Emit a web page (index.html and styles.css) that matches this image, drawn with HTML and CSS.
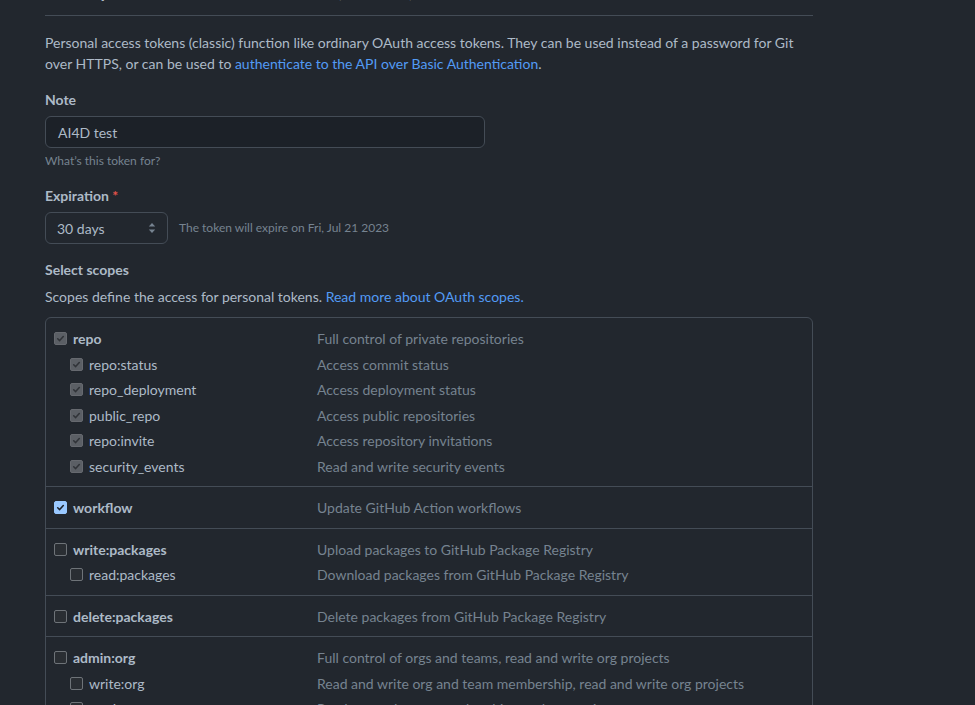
FILE: index.html
```html
<!DOCTYPE html>
<html lang="en">
<head>
<meta charset="utf-8">
<title>New personal access token (classic)</title>
<link rel="stylesheet" href="styles.css">
</head>
<body>
<main class="page">
  <div class="subhead">
    <h1 class="subhead-title">New personal access token (classic)</h1>
  </div>

  <p class="intro">Personal access tokens (classic) function like ordinary OAuth access tokens. They can be used instead of a password for Git over HTTPS, or can be used to <a href="#">authenticate to the API over Basic Authentication</a>.</p>

  <div class="form-group">
    <label class="form-label">Note</label>
    <div class="input">AI4D test</div>
    <p class="note">What’s this token for?</p>
  </div>

  <div class="form-group">
    <label class="form-label">Expiration <span class="req">*</span></label>
    <div class="select-row">
      <div class="select">
        <span>30 days</span>
        <svg class="select-arrows" width="8" height="12" viewBox="0 0 8 12"><path d="M4 1 L7.2 4.6 H0.8 Z" fill="#768390"/><path d="M4 11 L7.2 7.4 H0.8 Z" fill="#768390"/></svg>
      </div>
      <span class="select-hint">The token will expire on Fri, Jul 21 2023</span>
    </div>
  </div>

  <div class="form-group scopes-group">
    <label class="form-label">Select scopes</label>
    <p class="scopes-desc">Scopes define the access for personal tokens. <a href="#">Read more about OAuth scopes.</a></p>

    <div class="scopes">
      <div class="scope">
        <div class="row main"><span class="name"><span class="cb cb-dis"><svg viewBox="0 0 13 13"><path d="M3.2 6.8 5.5 9 9.8 4.2"/></svg></span>repo</span><span class="desc">Full control of private repositories</span></div>
        <div class="row sub"><span class="name"><span class="cb cb-dis"><svg viewBox="0 0 13 13"><path d="M3.2 6.8 5.5 9 9.8 4.2"/></svg></span>repo:status</span><span class="desc">Access commit status</span></div>
        <div class="row sub"><span class="name"><span class="cb cb-dis"><svg viewBox="0 0 13 13"><path d="M3.2 6.8 5.5 9 9.8 4.2"/></svg></span>repo_deployment</span><span class="desc">Access deployment status</span></div>
        <div class="row sub"><span class="name"><span class="cb cb-dis"><svg viewBox="0 0 13 13"><path d="M3.2 6.8 5.5 9 9.8 4.2"/></svg></span>public_repo</span><span class="desc">Access public repositories</span></div>
        <div class="row sub"><span class="name"><span class="cb cb-dis"><svg viewBox="0 0 13 13"><path d="M3.2 6.8 5.5 9 9.8 4.2"/></svg></span>repo:invite</span><span class="desc">Access repository invitations</span></div>
        <div class="row sub"><span class="name"><span class="cb cb-dis"><svg viewBox="0 0 13 13"><path d="M3.2 6.8 5.5 9 9.8 4.2"/></svg></span>security_events</span><span class="desc">Read and write security events</span></div>
      </div>
      <div class="scope">
        <div class="row main"><span class="name"><span class="cb cb-on"><svg viewBox="0 0 13 13"><path d="M3.2 6.8 5.5 9 9.8 4.2"/></svg></span>workflow</span><span class="desc">Update GitHub Action workflows</span></div>
      </div>
      <div class="scope">
        <div class="row main"><span class="name"><span class="cb"></span>write:packages</span><span class="desc">Upload packages to GitHub Package Registry</span></div>
        <div class="row sub"><span class="name"><span class="cb"></span>read:packages</span><span class="desc">Download packages from GitHub Package Registry</span></div>
      </div>
      <div class="scope">
        <div class="row main"><span class="name"><span class="cb"></span>delete:packages</span><span class="desc">Delete packages from GitHub Package Registry</span></div>
      </div>
      <div class="scope">
        <div class="row main"><span class="name"><span class="cb"></span>admin:org</span><span class="desc">Full control of orgs and teams, read and write org projects</span></div>
        <div class="row sub"><span class="name"><span class="cb"></span>write:org</span><span class="desc">Read and write org and team membership, read and write org projects</span></div>
        <div class="row sub"><span class="name"><span class="cb"></span>read:org</span><span class="desc">Read org and team membership, read org projects</span></div>
      </div>
    </div>
  </div>
</main>
</body>
</html>
```
FILE: styles.css
```css
* { box-sizing: border-box; }

html, body {
  margin: 0;
  background: #22272e;
  color: #adbac7;
  font-family: Lato, "Noto Sans", sans-serif;
  font-size: 14px;
  line-height: 1.5;
}

.page {
  width: 768px;
  margin: -30px 0 0 45px;
  overflow: hidden;
}

a { color: #539bf5; text-decoration: none; }

.subhead {
  border-bottom: 1px solid #444c56;
  padding-bottom: 9px;
}

.subhead-title {
  margin: 0;
  font-size: 24px;
  font-weight: 400;
  line-height: 36px;
}

.intro {
  margin: 16px 0 0;
  line-height: 21px;
}

.form-group { margin-top: 15px; }

.form-label {
  display: block;
  font-weight: 700;
  line-height: 21px;
  margin-bottom: 6px;
}

.req { color: #e5534b; }

.input {
  width: 440px;
  height: 32px;
  padding: 0 12px;
  display: flex;
  align-items: center;
  background: #1c2128;
  border: 1px solid #444c56;
  border-radius: 6px;
  color: #adbac7;
}

.note {
  margin: 4px 0 0;
  font-size: 12px;
  line-height: 18px;
  color: #768390;
}

.select-row {
  display: flex;
  align-items: center;
  gap: 11px;
}

.select {
  width: 123px;
  height: 32px;
  padding: 0 11px 0 11px;
  display: flex;
  align-items: center;
  justify-content: space-between;
  border: 1px solid #444c56;
  border-radius: 6px;
  background: #22272e;
}

.select-hint {
  font-size: 12px;
  color: #768390;
}

.scopes-group { margin-top: 15px; }

.scopes-desc {
  margin: 6px 0 0;
  line-height: 21px;
}

.scopes {
  margin-top: 10px;
  border: 1px solid #444c56;
  border-radius: 6px;
}

.scope {
  padding: 8px 8px 7px;
}

.scope + .scope { border-top: 1px solid #444c56; }

.row {
  display: grid;
  grid-template-columns: 263px 1fr;
  height: 25.5px;
  align-items: center;
}

.name {
  display: flex;
  align-items: center;
  gap: 6px;
}

.main .name { font-weight: 700; }
.sub .name { padding-left: 16px; }

.desc { color: #768390; }

.cb {
  width: 13px;
  height: 13px;
  flex: none;
  border-radius: 2px;
  border: 1px solid #6e7378;
  background: #2a2e33;
  display: flex;
}

.cb svg {
  width: 11px;
  height: 11px;
  fill: none;
  stroke-width: 1.8;
  stroke-linecap: round;
  stroke-linejoin: round;
}

.cb-dis {
  background: #5b5f65;
  border-color: #66696f;
}
.cb-dis svg { stroke: #303338; }

.cb-on {
  background: #99c8ff;
  border-color: #99c8ff;
}
.cb-on svg { stroke: #1c2128; }
```
